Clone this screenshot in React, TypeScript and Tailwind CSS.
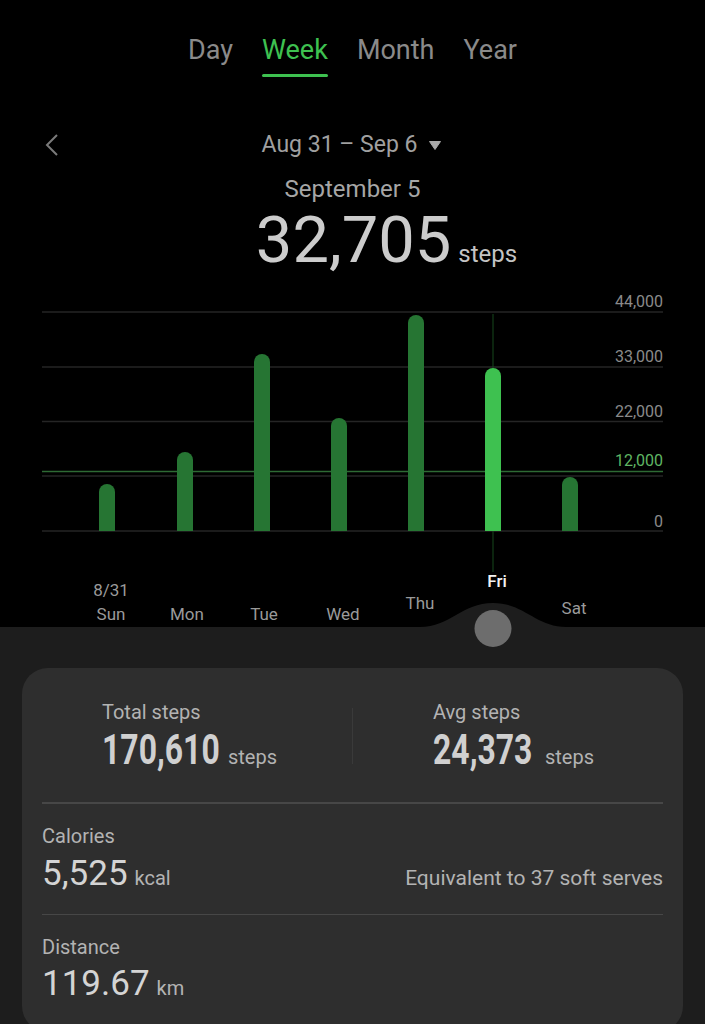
const bars = [
  { x: 107, top: 484 },
  { x: 185, top: 452 },
  { x: 262, top: 354 },
  { x: 339, top: 418 },
  { x: 416, top: 315 },
  { x: 493, top: 368, active: true },
  { x: 570, top: 477 },
];

const days = [
  { x: 111, y: 620, label: "Sun" },
  { x: 187, y: 620, label: "Mon" },
  { x: 264, y: 620, label: "Tue" },
  { x: 343, y: 620, label: "Wed" },
  { x: 420, y: 609, label: "Thu" },
  { x: 497, y: 587, label: "Fri", active: true },
  { x: 574, y: 614, label: "Sat" },
];

const grid = [
  { y: 312, label: "44,000", ty: 307 },
  { y: 367, label: "33,000", ty: 362 },
  { y: 421.5, label: "22,000", ty: 417 },
  { y: 476, label: "", ty: 0 },
  { y: 531, label: "0", ty: 527 },
];

function barPath(x: number, top: number) {
  const r = 8;
  return `M${x - r} 531 V${top + r} A${r} ${r} 0 0 1 ${x + r} ${top + r} V531 Z`;
}

function Chart() {
  return (
    <svg width="705" height="337" viewBox="0 290 705 337" className="block">
      {grid.map((g) => (
        <line key={g.y} x1="42" x2="663" y1={g.y} y2={g.y} stroke="#252525" strokeWidth="1.5" />
      ))}
      <line x1="42" x2="663" y1="471.5" y2="471.5" stroke="#2e6a34" strokeWidth="1.5" />
      {grid
        .filter((g) => g.label)
        .map((g) => (
          <text key={g.label} x="663" y={g.ty} textAnchor="end" fontSize="16" fill="#8a8a8a" fontFamily="Roboto">
            {g.label}
          </text>
        ))}
      <text x="663" y="466" textAnchor="end" fontSize="16" fill="#5fb563" fontFamily="Roboto">
        12,000
      </text>
      <line x1="493" x2="493" y1="314" y2="572" stroke="#17491d" strokeWidth="1" />
      {bars.map((b) => (
        <path key={b.x} d={barPath(b.x, b.top)} fill={b.active ? "#3ec150" : "#267533"} />
      ))}
      <text x="111" y="596" textAnchor="middle" fontSize="17" fill="#9a9a9a" fontFamily="Roboto">
        8/31
      </text>
      {days.map((d) => (
        <text
          key={d.label}
          x={d.x}
          y={d.y}
          textAnchor="middle"
          fontSize="17"
          fontWeight={d.active ? 500 : 400}
          fill={d.active ? "#f2f2f2" : "#9a9a9a"}
          fontFamily="Roboto"
        >
          {d.label}
        </text>
      ))}
    </svg>
  );
}

function Condensed({ value, width }: { value: string; width: string }) {
  return (
    <span className={`inline-block whitespace-nowrap ${width}`}>
      <span className="inline-block origin-left scale-x-[0.76] font-bold">{value}</span>
    </span>
  );
}

export default function App() {
  return (
    <div className="min-h-screen w-full bg-[#1d1d1d] font-['Roboto',sans-serif]">
      <div className="bg-black">
        {/* tabs */}
        <div className="flex items-start justify-center gap-[29px] pt-[32px] text-[27px] leading-[36px] text-[#8a8a8a]">
          <span>Day</span>
          <div className="flex flex-col">
            <span className="text-[#3ec150]">Week</span>
            <div className="mt-[6px] h-[3px] rounded-full bg-[#3ec150]" />
          </div>
          <span>Month</span>
          <span>Year</span>
        </div>

        {/* range */}
        <div className="mt-[54px] grid grid-cols-[1fr_auto_1fr] items-center text-[23px] leading-[28px] text-[#a0a0a0]">
          <div className="pl-[45px]">
            <svg width="14" height="22" viewBox="0 0 14 22">
              <polyline points="12,1 2,11 12,21" fill="none" stroke="#7a7a7a" strokeWidth="2" />
            </svg>
          </div>
          <div className="flex items-center gap-[12px] pr-[2px]">
            <span>Aug 31 – Sep 6</span>
            <svg width="12" height="9" viewBox="0 0 12 9">
              <path d="M0.5 0.5 H11.5 L6 8.5 Z" fill="#a8a8a8" strokeLinejoin="round" stroke="#a8a8a8" strokeWidth="1" />
            </svg>
          </div>
          <div />
        </div>

        <div className="mt-[16px] text-center text-[24px] leading-[28px] text-[#a6a6a6]">September 5</div>

        <div className="mt-[6px] flex items-baseline justify-center pl-[68px] text-[#cccccc]">
          <span className="text-[65px] leading-[62px]">32,705</span>
          <span className="ml-[7px] text-[24px] leading-[28px] text-[#c4c4c4]">steps</span>
        </div>

        <div className="mt-[19px]">
          <Chart />
        </div>
      </div>

      {/* bottom panel */}
      <div className="relative bg-[#1d1d1d] px-[22px] pt-[41px]">
        <svg width="146" height="50" viewBox="0 0 146 50" className="absolute left-[420px] top-[-24px]">
          <path d="M0 24 C 30 24, 42 0, 73 0 C 104 0, 116 24, 146 24 Z" fill="#1d1d1d" />
          <circle cx="73" cy="25.5" r="18.5" fill="#6d6d6d" />
        </svg>

        <div className="rounded-[26px] bg-[#2e2e2e] px-[20px] pb-[28px]">
          <div className="grid grid-cols-[310px_1px_310px] items-center pt-[31px] pb-[30px]">
            <div className="pl-[60px]">
              <div className="text-[20px] leading-[26px] text-[#b3b3b3]">Total steps</div>
              <div className="mt-[3px] flex items-baseline text-[#d0d0d0]">
                <span className="text-[42px] leading-[44px]">
                  <Condensed value="170,610" width="w-[117px]" />
                </span>
                <span className="ml-[9px] text-[20px] leading-[26px] text-[#b3b3b3]">steps</span>
              </div>
            </div>
            <div className="h-[56px] w-px bg-[#3a3a3a]" />
            <div className="pl-[80px]">
              <div className="text-[20px] leading-[26px] text-[#b3b3b3]">Avg steps</div>
              <div className="mt-[3px] flex items-baseline text-[#d0d0d0]">
                <span className="text-[42px] leading-[44px]">
                  <Condensed value="24,373" width="w-[103px]" />
                </span>
                <span className="ml-[9px] text-[20px] leading-[26px] text-[#b3b3b3]">steps</span>
              </div>
            </div>
          </div>

          <div className="h-[1.5px] bg-[#474747]" />

          <div className="pt-[19px] pb-[20px]">
            <div className="text-[20px] leading-[26px] text-[#b3b3b3]">Calories</div>
            <div className="mt-[5px] flex items-baseline justify-between">
              <div className="flex items-baseline">
                <span className="text-[35px] leading-[40px] text-[#d4d4d4]">5,525</span>
                <span className="ml-[7px] text-[20px] leading-[26px] text-[#b3b3b3]">kcal</span>
              </div>
              <span className="text-[21px] leading-[26px] text-[#b3b3b3]">Equivalent to 37 soft serves</span>
            </div>
          </div>

          <div className="h-[1.5px] bg-[#474747]" />

          <div className="pt-[19px]">
            <div className="text-[20px] leading-[26px] text-[#b3b3b3]">Distance</div>
            <div className="mt-[4px] flex items-baseline">
              <span className="text-[35px] leading-[40px] text-[#d4d4d4]">119.67</span>
              <span className="ml-[7px] text-[20px] leading-[26px] text-[#b3b3b3]">km</span>
            </div>
          </div>
        </div>
      </div>
    </div>
  );
}
